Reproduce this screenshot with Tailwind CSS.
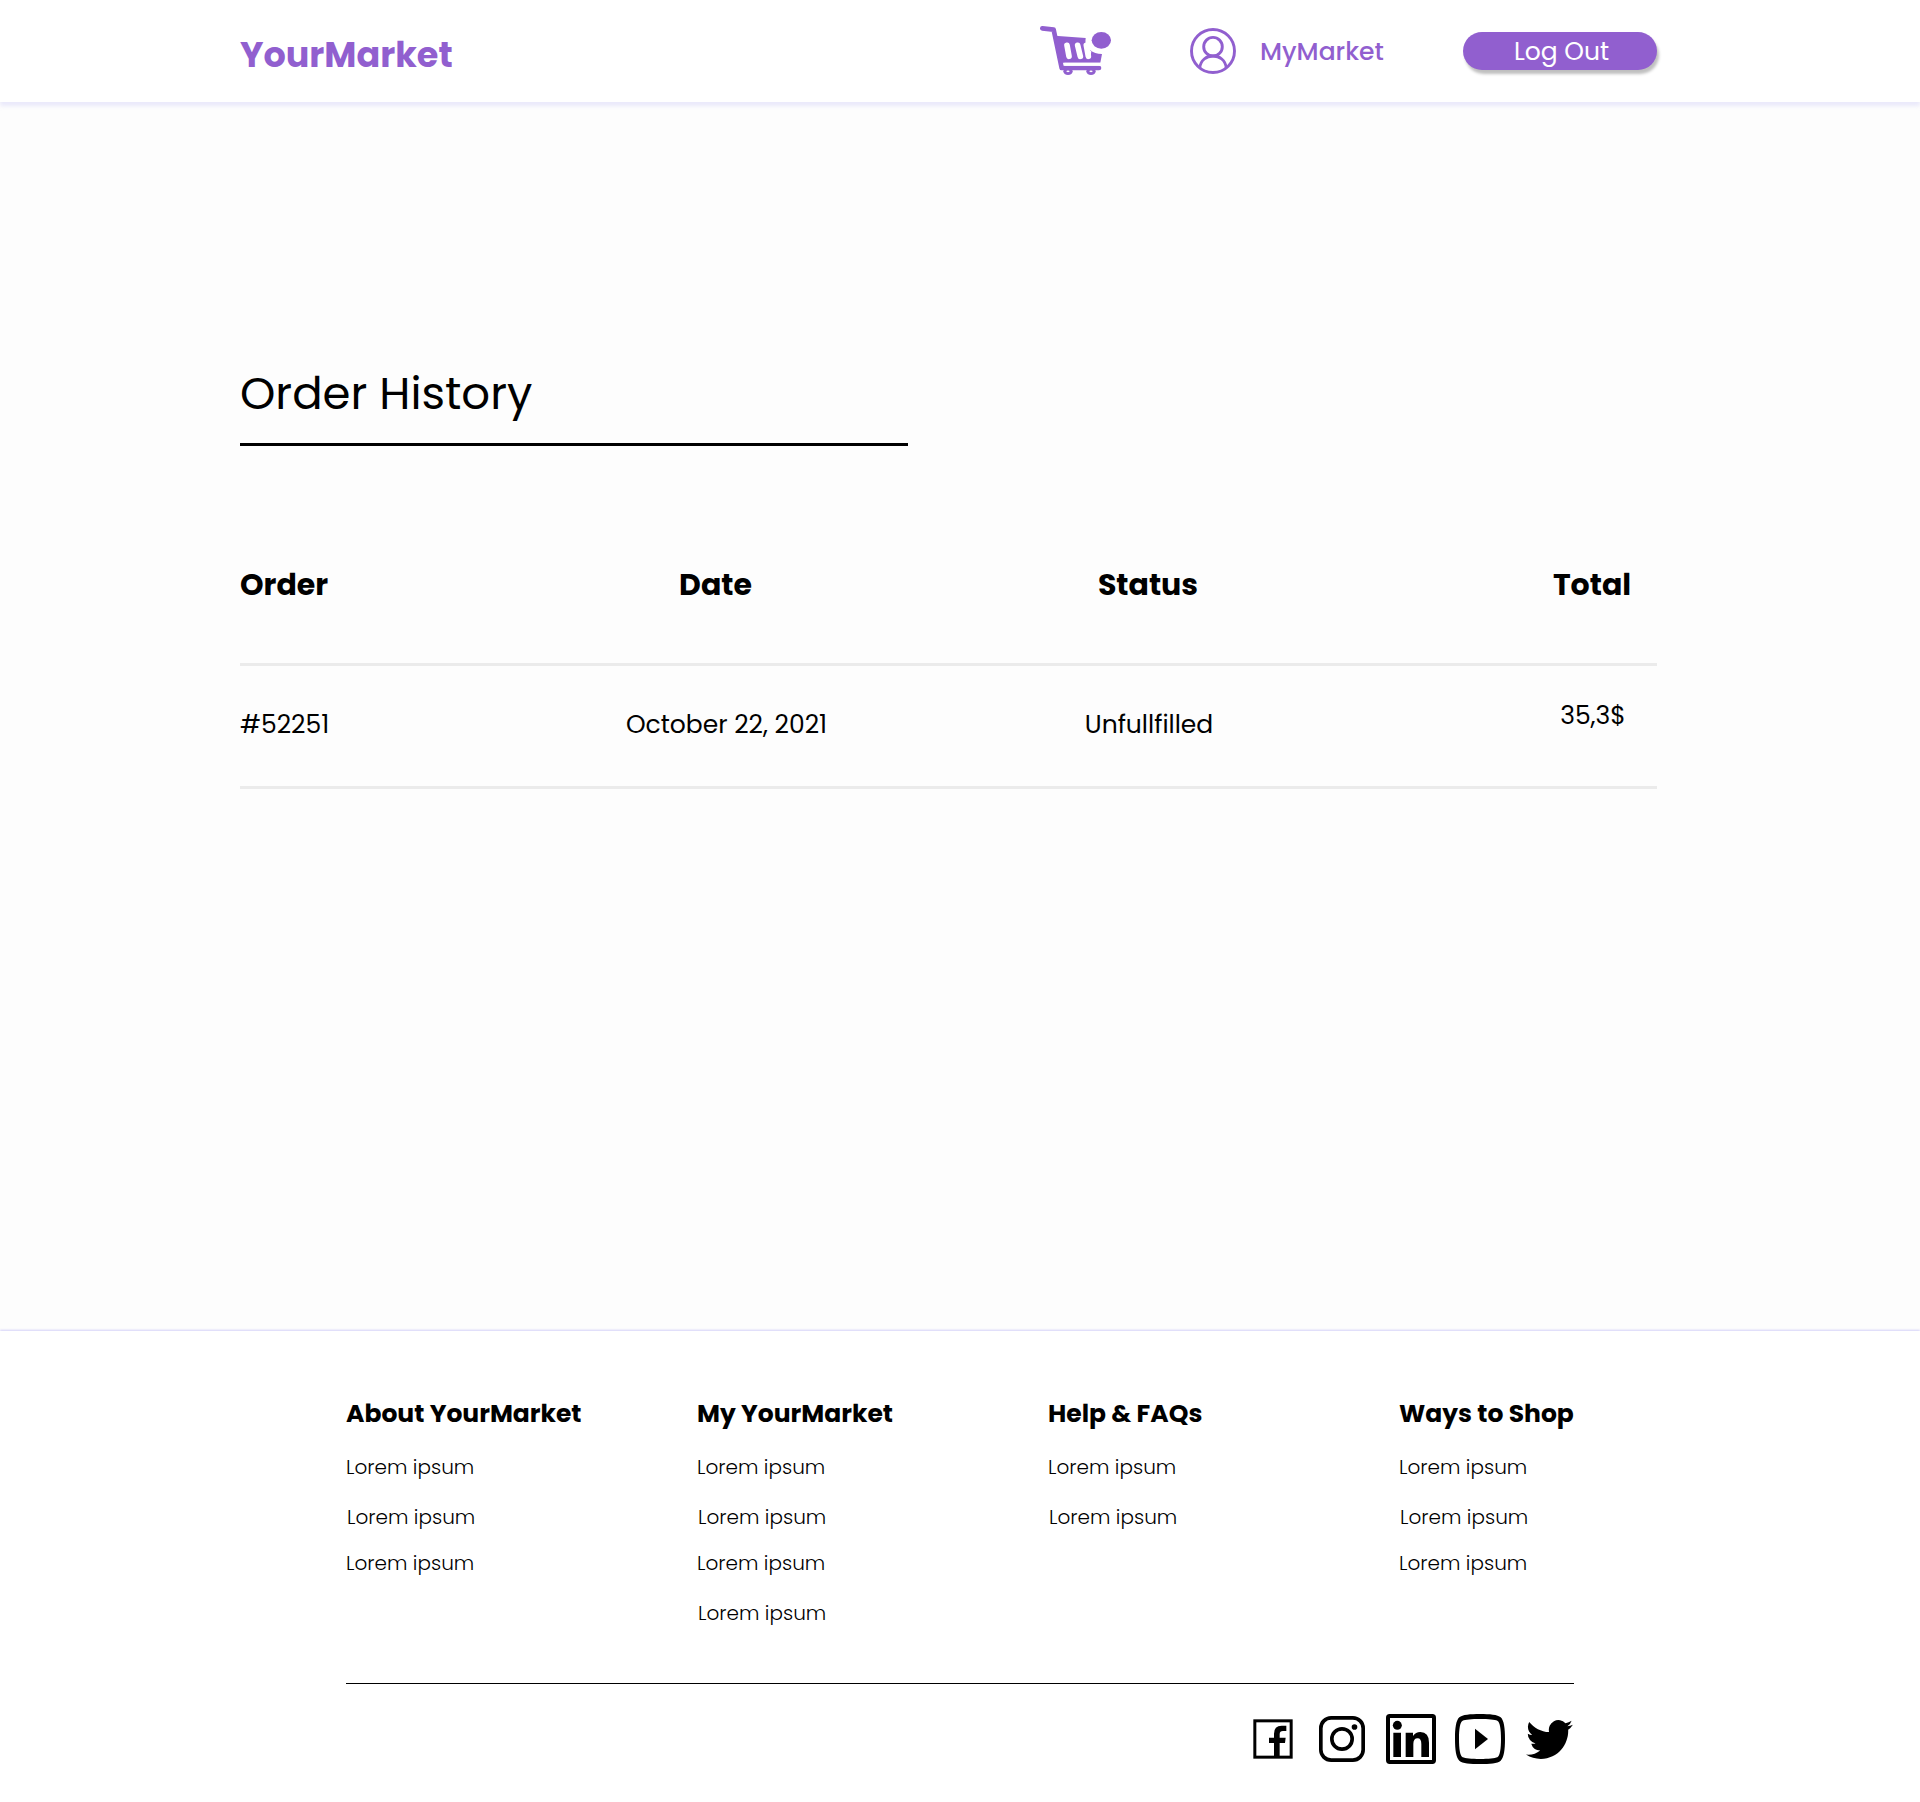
<!DOCTYPE html>
<html lang="en">
<head>
<meta charset="utf-8">
<title>YourMarket</title>
<script src="https://cdn.jsdelivr.net/npm/@tailwindcss/browser@4"></script>
</head>
<body class="bg-[#fdfdfd] font-['Poppins','Inter',sans-serif] text-black">
<header class="relative flex h-[102px] items-start bg-white pl-[240px] text-[#915fcf] shadow-[0_4px_4px_rgba(200,198,250,0.35)]">
  <div class="w-[800px] pt-[28px] text-[35px] leading-[54px] font-bold">YourMarket</div>
  <svg class="mt-[25px] h-[51px] w-[72px]" viewBox="60 45 216 153" fill="#915fcf">
    <path d="M67 55 101 59 125 174H237" fill="none" stroke="#915fcf" stroke-width="14" stroke-linecap="round" stroke-linejoin="round"/>
    <path d="M104 77 197 84Q193 104 210 120Q224 132 246 132L241 158H118Z"/>
    <ellipse cx="144" cy="184" rx="14" ry="11"/><ellipse cx="213" cy="184" rx="14" ry="11"/>
    <path d="M141 106 147 139M173 106 181 139M199 106 205 139" fill="none" stroke="#fff" stroke-width="17" stroke-linecap="round"/>
    <path d="M196 92Q200 114 214 124L212 138H200Z" fill="#fff"/>
    <path d="M133 163H244" stroke="#fff" stroke-width="9"/>
    <ellipse cx="144" cy="184" rx="5" ry="2.500" fill="#fff"/><ellipse cx="213" cy="184" rx="5" ry="2.500" fill="#fff"/>
    <ellipse cx="244" cy="91" rx="29" ry="25"/>
  </svg>
  <svg class="mt-[28px] ml-[78px] size-[46px]" viewBox="0 0 46 46" fill="none" stroke="#915fcf" stroke-width="2.900">
    <circle cx="23" cy="23" r="21.500"/><circle cx="23" cy="18.700" r="9.300"/><path d="M9.800 40C11 24 35 24 36.200 40"/>
  </svg>
  <div class="ml-[24px] w-[203px] pt-[34px] text-[25px] leading-[36px] font-medium">MyMarket</div>
  <button class="mt-[32px] flex h-[38px] w-[194px] items-start justify-center rounded-full bg-[#915fcf] pt-[2px] pl-[3px] text-[25px] leading-[36px] text-white shadow-[2px_4px_3px_rgba(0,0,0,0.25)]">Log Out</button>
</header>
<main class="h-[1229px] pt-[256px] pl-[240px]">
  <h1 class="text-[45px] leading-[72px]">Order History</h1>
  <div class="mt-[13px] h-[3px] w-[668px] bg-black"></div>
  <div class="mt-[116px] w-[1417px]">
    <div class="grid h-[104px] grid-cols-[290px_392px_453px_282px] border-b-3 border-[#ebebeb] text-[30px] leading-[45px] font-bold">
      <div>Order</div>
      <div class="pr-[21px] text-center">Date</div>
      <div class="pr-px text-center">Status</div>
      <div class="pl-[152px] text-center">Total</div>
    </div>
    <div class="grid h-[123px] grid-cols-[290px_392px_453px_282px] border-b-3 border-[#ebebeb] pt-[41px] text-[25px] leading-[36px]">
      <div>#52251</div>
      <div class="pl-px text-center">October 22, 2021</div>
      <div class="pl-px text-center">Unfullfilled</div>
      <div class="-mt-[9px] pl-[154px] text-center">35,3$</div>
    </div>
  </div>
</main>
<footer class="relative h-[471px] bg-white pt-[65px] pl-[346px] shadow-[0_-1px_2px_rgba(150,145,245,0.4)]">
  <div class="grid h-[288px] w-[1228px] grid-cols-[351px_351px_351px_175px] border-b border-black text-[20px] leading-[30px] font-light">
    <div>
      <h2 class="text-[25px] leading-[36px] font-bold whitespace-nowrap">About YourMarket</h2>
      <p class="mt-5">Lorem ipsum</p><p class="mt-5 pl-px">Lorem ipsum</p><p class="mt-4">Lorem ipsum</p>
    </div>
    <div>
      <h2 class="text-[25px] leading-[36px] font-bold whitespace-nowrap">My YourMarket</h2>
      <p class="mt-5">Lorem ipsum</p><p class="mt-5 pl-px">Lorem ipsum</p><p class="mt-4">Lorem ipsum</p><p class="mt-5 pl-px">Lorem ipsum</p>
    </div>
    <div>
      <h2 class="text-[25px] leading-[36px] font-bold whitespace-nowrap">Help &amp; FAQs</h2>
      <p class="mt-5">Lorem ipsum</p><p class="mt-5 pl-px">Lorem ipsum</p>
    </div>
    <div>
      <h2 class="text-[25px] leading-[36px] font-bold whitespace-nowrap">Ways to Shop</h2>
      <p class="mt-5">Lorem ipsum</p><p class="mt-5 pl-px">Lorem ipsum</p><p class="mt-4">Lorem ipsum</p>
    </div>
  </div>
  <div class="flex w-[1228px] items-center justify-end pt-[30px] pr-px">
    <svg class="mr-[26px] size-10" viewBox="0 0 120 120">
      <rect x="5.500" y="5.500" width="109" height="109" fill="none" stroke="#000" stroke-width="9"/>
      <path d="M63 113V72H48V56H63V44Q63 20 86 20H100V36H90Q80 36 80 46V56H98L96 72H80V113Z"/>
    </svg>
    <svg class="mr-[21px] size-[46px]" viewBox="0 0 138 138">
      <rect x="5.500" y="5.500" width="127" height="127" rx="31" fill="none" stroke="#000" stroke-width="11"/>
      <circle cx="69" cy="69" r="30.500" fill="none" stroke="#000" stroke-width="11"/><circle cx="106.500" cy="33" r="8.500"/>
    </svg>
    <svg class="mr-[19px] size-[50px]" viewBox="0 0 150 150">
      <rect x="6" y="6" width="138" height="138" rx="5" fill="none" stroke="#000" stroke-width="12"/>
      <circle cx="34" cy="34" r="13.500"/><path d="M22 56H45V129H22ZM59 56H81V66Q89 54 103 54Q129 54 129 86V129H106V90Q106 73 95 73Q82 73 82 90V129H59Z"/>
    </svg>
    <svg class="mr-[21px] size-[50px]" viewBox="0 0 150 150">
      <path fill-rule="evenodd" d="M75 0C104 0 128 2 137 10C147 19 150 43 150 75C150 107 147 131 137 140C128 148 104 150 75 150C46 150 22 148 13 140C3 131 0 107 0 75C0 43 3 19 13 10C22 2 46 0 75 0ZM75 15C50 15 30 17 23 20C15 24 12 46 12 75C12 104 15 126 23 130C30 133 50 135 75 135C100 135 120 133 127 130C135 126 138 104 138 75C138 46 135 24 127 20C120 17 100 15 75 15Z"/>
      <path d="M60 44V106L99 75Z"/>
    </svg>
    <svg class="h-[39px] w-[47px]" viewBox="0 2.200 24 19.600" preserveAspectRatio="none">
      <path d="M23.950 4.570a10 10 0 0 1-2.820.770 4.960 4.960 0 0 0 2.160-2.720c-.95.550-2 .950-3.130 1.180a4.920 4.920 0 0 0-8.380 4.480C7.690 8.100 4.070 6.130 1.640 3.160a4.820 4.820 0 0 0-.67 2.480c0 1.710.87 3.210 2.190 4.100a4.900 4.900 0 0 1-2.230-.62v.06a4.920 4.920 0 0 0 3.950 4.830 5 5 0 0 1-2.210.08 4.940 4.940 0 0 0 4.600 3.420A9.870 9.870 0 0 1 0 19.540a13.990 13.990 0 0 0 7.560 2.210c9.050 0 14-7.500 14-13.980 0-.21 0-.42-.02-.63a9.940 9.940 0 0 0 2.410-2.570z"/>
    </svg>
  </div>
</footer>
</body>
</html>
